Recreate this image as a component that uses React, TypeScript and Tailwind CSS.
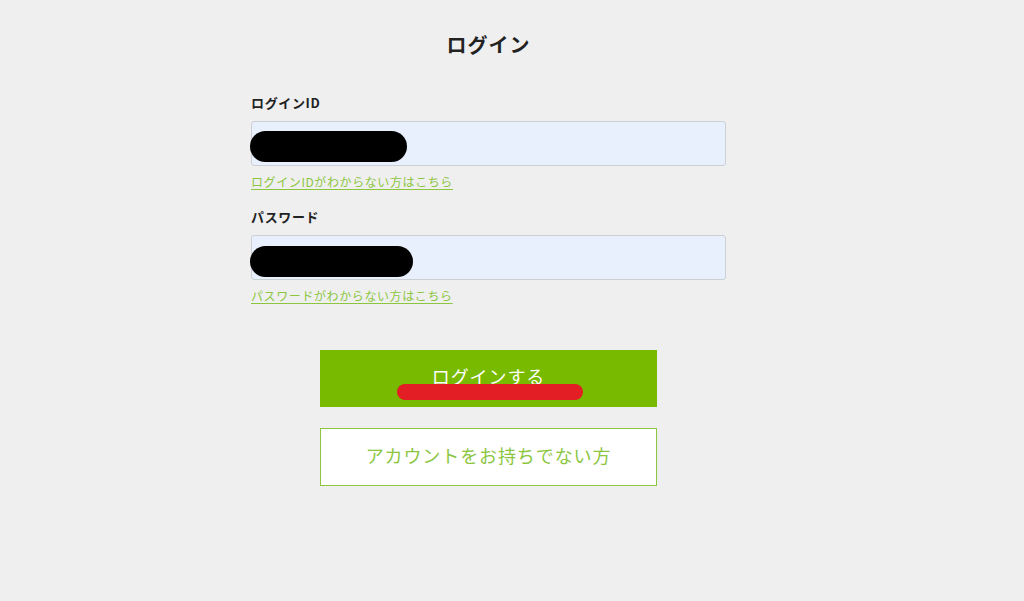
const font = "font-['Noto_Sans_CJK_JP','Noto_Sans',sans-serif]";

interface FieldProps {
  label: string;
  linkText: string;
  redactWidth: string;
  redactTop: string;
}

const Field = ({ label, linkText, redactWidth, redactTop }: FieldProps) => {
  return (
    <div className="flex flex-col">
      <label className="text-[13px] leading-[20px] font-bold tracking-[0.05em] text-[#222]">
        {label}
      </label>

      <div className="relative mt-[8px] h-[45px] rounded-[3px] border border-[#ccd0d4] bg-[#e8f0fe]">
        {/* masked value */}
        <span
          className={`absolute left-[-2px] h-[31px] rounded-full bg-black ${redactWidth} ${redactTop}`}
        />
      </div>

      <a
        href="#"
        className="mt-[7px] self-start text-[12px] leading-[18px] tracking-[0.05em] text-[#8cc63f] underline underline-offset-2"
      >
        {linkText}
      </a>
    </div>
  );
};

const App = () => {
  return (
    <div className={`min-h-[601px] bg-[#efefef] ${font}`}>
      <div className="flex justify-center pr-[47px]">
        <div className="flex w-[475px] flex-col pt-[30px]">
          <h1 className="text-center text-[20px] leading-[30px] font-bold tracking-[0.05em] text-[#222]">
            ログイン
          </h1>

          <div className="mt-[33px]">
            <Field
              label="ログインID"
              linkText="ログインIDがわからない方はこちら"
              redactWidth="w-[157px]"
              redactTop="top-[9px]"
            />
          </div>

          <div className="mt-[16px]">
            <Field
              label="パスワード"
              linkText="パスワードがわからない方はこちら"
              redactWidth="w-[163px]"
              redactTop="top-[10px]"
            />
          </div>

          <div className="mx-auto mt-[45px] flex w-[337px] flex-col gap-[21px]">
            <button className="relative flex h-[57px] items-center justify-center bg-[#78ba00] pb-[4px] text-[18px] tracking-[0.05em] text-white">
              ログインする
              <span className="absolute left-[77px] top-[34px] h-[16px] w-[186px] rounded-full bg-[#e31e24]" />
            </button>

            <button className="flex h-[58px] items-center justify-center border border-[#8cc63f] bg-white pb-[4px] text-[18px] tracking-[0.05em] text-[#8cc63f]">
              アカウントをお持ちでない方
            </button>
          </div>
        </div>
      </div>
    </div>
  );
};

export default App;
